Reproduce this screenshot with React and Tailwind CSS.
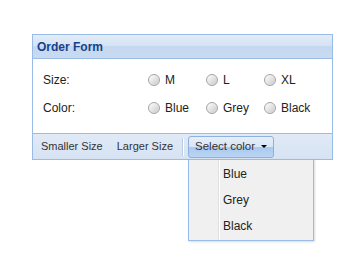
import React from 'react';

const Radio = ({ label }) => (
  <label className="flex items-center gap-[5px]">
    <span className="w-[12px] h-[12px] rounded-full border border-[#a3a3a3] bg-gradient-to-br from-[#ffffff] via-[#e4e4e4] to-[#c8c8c8] shadow-[inset_0_0_1px_#fff]" />
    <span>{label}</span>
  </label>
);

export default function App() {
  const sizes = ['M', 'L', 'XL'];
  const colors = ['Blue', 'Grey', 'Black'];

  return (
    <div className="w-[360px] h-[265px] bg-white pt-[34px] pl-[32px] font-['Liberation_Sans',Arial,sans-serif] text-[12px] text-[#222]">
      <div className="w-[301px] border border-[#99bbe8]">
        {/* Header */}
        <div className="h-[24px] border-b border-[#99bbe8] bg-[linear-gradient(to_bottom,#e3ecf8_0%,#d6e3f4_45%,#c6d8f0_50%,#c9dbf1_100%)] flex items-center pl-[4px]">
          <span className="font-bold text-[#15428b] text-[12px]">Order Form</span>
        </div>

        {/* Body */}
        <div className="bg-white h-[74px] pt-[12px] pl-[10px]">
          <div className="grid grid-cols-[105px_58px_58px_auto] gap-y-[10px] items-center">
            <span>Size:</span>
            {sizes.map((s) => <Radio key={s} label={s} />)}
            <span>Color:</span>
            {colors.map((c) => <Radio key={c} label={c} />)}
          </div>
        </div>

        {/* Toolbar */}
        <div className="h-[26px] border-t border-[#99bbe8] bg-[linear-gradient(to_bottom,#e1eaf6,#d6e3f3)] flex items-center pl-[8px] text-[11px] text-[#333]">
          <span className="mr-[14px]">Smaller Size</span>
          <span className="mr-[9px]">Larger Size</span>
          <span className="w-[2px] h-[18px] border-l border-[#b8cbe4] bg-white mr-[4px]" />
          <div className="relative">
            <button className="h-[22px] w-[86px] rounded-[3px] border border-[#8eb0dc] bg-[linear-gradient(to_bottom,#e6eef9_0%,#d9e6f6_48%,#a9c9ef_52%,#bcd5f3_100%)] flex items-center pl-[6px] pr-[6px] text-[11.5px] text-[#333]">
              <span className="flex-1 text-left">Select color</span>
              <span className="w-0 h-0 border-l-[3px] border-r-[3px] border-t-[3px] border-l-transparent border-r-transparent border-t-black" />
            </button>
            <div className="absolute left-0 top-[23px] w-[126px] h-[82px] bg-[#f0f0f0] border border-[#99bbe8] shadow-[1px_1px_2px_rgba(0,0,0,0.15)] flex">
              <div className="w-[30px] border-r border-[#e0e0e0]" />
              <div className="w-px bg-white" />
              <div className="flex-1 flex flex-col pt-[1px] text-[12px] text-[#222]">
                {colors.map((c) => (
                  <div key={c} className="h-[26px] flex items-center pl-[3px]">{c}</div>
                ))}
              </div>
            </div>
          </div>
        </div>
      </div>
    </div>
  );
}
